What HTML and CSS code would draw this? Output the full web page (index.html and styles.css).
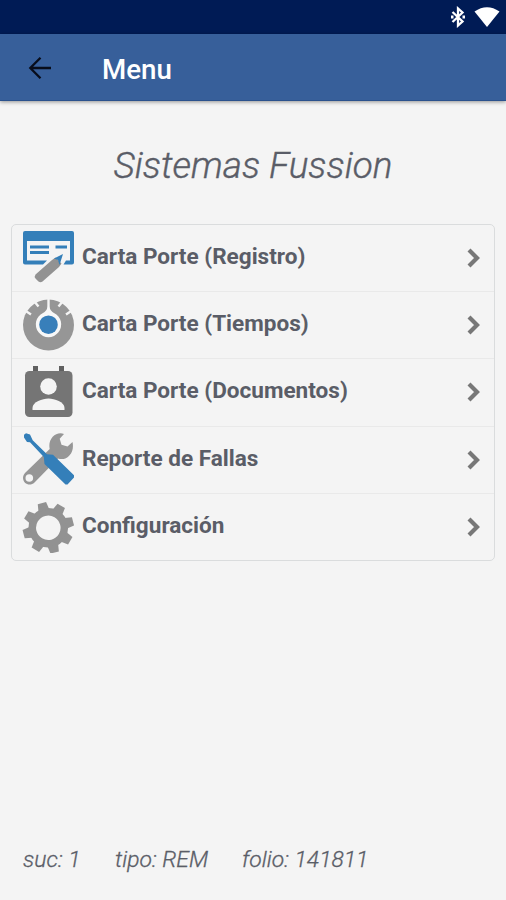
FILE: index.html
```html
<!DOCTYPE html>
<html lang="es">
<head>
<meta charset="utf-8">
<title>Menu</title>
<link rel="stylesheet" href="styles.css">
</head>
<body>
<div class="screen">
  <div class="status">
    <svg class="bt" width="14" height="22" viewBox="0 0 14 22"><path d="M1.500 6 11.500 15.500 7 19.500V2.500l4.500 4L1.500 16" fill="none" stroke="#fff" stroke-width="2.300"/><path d="M0 9.500h2.500v3H0zM11.500 9.500H14v3h-2.500z" fill="#fff"/></svg>
    <svg class="wifi" width="26" height="20" viewBox="0 0 26 20"><path d="M.5 4.500Q13-4 25.500 4.500L13 20z" fill="#fff"/></svg>
  </div>
  <header class="bar">
    <svg class="back" width="24" height="24" viewBox="0 0 24 24"><path d="M23 12H2.500M12.500 1.800 2.300 12l10.200 10.200" fill="none" stroke="#080d1b" stroke-width="2.300"/></svg>
    <h1>Menu</h1>
  </header>
  <main>
    <h2>Sistemas Fussion</h2>
    <ul class="menu">
      <li>
        <svg class="icon raised" viewBox="0 0 52 52">
          <path d="M3 0h47a2 2 0 0 1 2 2v29.500a2 2 0 0 1-2 2h-8.500l2.500-4h4V10H5v19.500h20l-4 4H3a2 2 0 0 1-2-2V2a2 2 0 0 1 2-2z" fill="#347fb9"/>
          <path d="M8 16h19M8 21.500h19M33.500 16h11.500" stroke="#347fb9" stroke-width="3"/>
          <path d="m30 29 7 7-16.500 14.500q-2 1.500-4 0l-3-3q-1.500-2 0-4zM30 29l3.500-2.500 6 6-2.500 3.500z" fill="#929292"/>
          <path d="m41 23-9 4.500 4 1.500 1.500 5z" fill="#347fb9"/>
        </svg>
        <span>Carta Porte (Registro)</span>
        <svg class="chev" viewBox="0 0 14 20"><path d="m2 2 8 8-8 8"/></svg>
      </li>
      <li>
        <svg class="icon" viewBox="0 0 52 52">
          <circle cx="26.500" cy="26" r="25.500" fill="#969696"/>
          <path d="M26.500 0v10M12 2l4.500 5.500M41 2l-4.500 5.500M3 11.500l6 4M50 11.500l-6 4" stroke="#f4f4f4" stroke-width="2.400"/>
          <path d="M26.500 5q1 6.500 5.500 9a12.700 12.700 0 1 1-11 0q4.500-2.500 5.500-9z" fill="#f8f8f8"/>
          <circle cx="26.500" cy="25.700" r="9.300" fill="#387fba"/>
        </svg>
        <span>Carta Porte (Tiempos)</span>
        <svg class="chev" viewBox="0 0 14 20"><path d="m2 2 8 8-8 8"/></svg>
      </li>
      <li>
        <svg class="icon" viewBox="0 0 52 52">
          <path d="M11 0h5v7h-5zM37 0h5v7h-5z" fill="#606060"/>
          <rect x="3" y="5" width="47.500" height="46" rx="4.500" fill="#757575"/>
          <circle cx="26.500" cy="20.500" r="8.300" fill="#f4f4f4"/>
          <path d="M10.500 44v-2c0-6 10-9.500 16-9.500s16 3.500 16 9.500v2z" fill="#f4f4f4"/>
        </svg>
        <span>Carta Porte (Documentos)</span>
        <svg class="chev" viewBox="0 0 14 20"><path d="m2 2 8 8-8 8"/></svg>
      </li>
      <li>
        <svg class="icon raised" viewBox="0 0 52 52">
          <path d="M42 1C34-2 25.500 6 27.700 16L3 40c-6 7 3 15.500 9.500 9.500L36 25.500c9 3 17-6 14.500-16.500l-5 4.500-6-1.800-1.800-6z" fill="#969696"/>
          <circle cx="7.300" cy="45" r="3.800" fill="#f4f4f4"/>
          <path d="m2 1.700 2-1.400 4 1.200 2.700 5.700L25 21.300l6 .4 21 20.500v2.300L45.500 51.500h-2L22.500 31l-.7-7L8 9.300 5 9 2 4.500z" fill="#347fb9"/>
        </svg>
        <span>Reporte de Fallas</span>
        <svg class="chev" viewBox="0 0 14 20"><path d="m2 2 8 8-8 8"/></svg>
      </li>
      <li>
        <svg class="icon" viewBox="0 0 52 52">
          <g transform="translate(26.300 26.800) rotate(-14.500)" fill="#929292">
            <circle r="16" fill="none" stroke="#929292" stroke-width="7.500"/>
            <path id="tooth" d="M-5.500-18-4.300-25.500H4.300L5.500-18z"/>
            <use href="#tooth" transform="rotate(45)"/>
            <use href="#tooth" transform="rotate(90)"/>
            <use href="#tooth" transform="rotate(135)"/>
            <use href="#tooth" transform="rotate(180)"/>
            <use href="#tooth" transform="rotate(225)"/>
            <use href="#tooth" transform="rotate(270)"/>
            <use href="#tooth" transform="rotate(315)"/>
          </g>
        </svg>
        <span>Configuración</span>
        <svg class="chev" viewBox="0 0 14 20"><path d="m2 2 8 8-8 8"/></svg>
      </li>
    </ul>
  </main>
  <footer><span class="suc">suc: 1</span><span class="tipo">tipo: REM</span><span class="folio">folio: 141811</span></footer>
</div>
</body>
</html>
```
FILE: styles.css
```css
* { box-sizing: border-box; }
body { margin: 0; background: #f4f4f4; font-family: Roboto, "Liberation Sans", sans-serif; color: #5a5d67; }
.screen { height: 900px; display: flex; flex-direction: column; }
.status { height: 34px; background: #001b55; display: flex; justify-content: flex-end; align-items: center; gap: 9px; padding-right: 6px; }
.bar { height: 67px; background: #375f9a; display: flex; align-items: center; padding: 1px 0 0 28px; border-bottom: 1px solid #2b528d; box-shadow: 0 1px 4px rgba(0,0,0,.4); }
.bar h1 { margin: 5px 0 0 50px; font-size: 27.700px; line-height: 32px; font-weight: 500; color: #fff; }
main { flex: 1; padding: 0 11px; }
h2 { margin: 43px 0 0; text-align: center; font-size: 36.900px; line-height: 44px; font-weight: 300; font-style: italic; -webkit-text-stroke: .4px #5a5d67; }
.menu { list-style: none; margin: 36px 0 0; padding: 0; border: 1px solid #dadcdd; border-radius: 5px; }
.menu li { height: 67.200px; display: flex; align-items: center; padding: 0 14px 0 10px; border-bottom: 1px solid #e9e9e9; }
.menu li:last-child { height: 66px; border-bottom: 0; }
.menu span { flex: 1; margin: -2px 0 0 8px; font-size: 22.550px; line-height: 28px; font-weight: 700; }
.icon { width: 52px; height: 52px; }
.raised { margin-top: -2px; }
.chev { width: 14px; height: 20px; margin-right: -1px; fill: none; stroke: #777; stroke-width: 4.200; }
footer { height: 82px; padding: 28px 0 0 23px; display: flex; font-size: 22.900px; line-height: 28px; font-weight: 300; font-style: italic; -webkit-text-stroke: .3px #5a5d67; }
.suc { width: 92px; }
.tipo { width: 127px; }
```
